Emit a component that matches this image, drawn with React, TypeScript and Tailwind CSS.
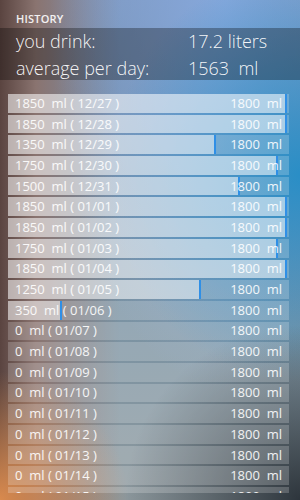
const ROWS: [number, string][] = [
  [1850, "12/27"],
  [1850, "12/28"],
  [1350, "12/29"],
  [1750, "12/30"],
  [1500, "12/31"],
  [1850, "01/01"],
  [1850, "01/02"],
  [1750, "01/03"],
  [1850, "01/04"],
  [1250, "01/05"],
  [350, "01/06"],
  [0, "01/07"],
  [0, "01/08"],
  [0, "01/09"],
  [0, "01/10"],
  [0, "01/11"],
  [0, "01/12"],
  [0, "01/13"],
  [0, "01/14"],
  [0, "01/15"],
];

function Row({ ml, date }: { ml: number; date: string }) {
  const pct = Math.min((ml / 1820) * 100, 99.3);
  return (
    <div className="relative h-[18.7px] shrink-0 bg-white/20">
      {ml > 0 && (
        <div
          className="absolute inset-y-0 left-0 bg-white/45 border-r-2 border-[#2f8fe6]"
          style={{ width: `${pct}%` }}
        />
      )}
      <div className="relative flex h-full items-center justify-between pl-[7px] pr-[7px] text-[13px] leading-none text-white/90 whitespace-pre">
        <span>{`${ml}  ml ( ${date} )`}</span>
        <span>{"1800  ml"}</span>
      </div>
    </div>
  );
}

export default function App() {
  return (
    <div
      className="w-[300px] h-[500px] overflow-hidden flex flex-col text-white bg-[radial-gradient(circle_at_0%_100%,#d98a4e_0%,transparent_22%),radial-gradient(circle_at_100%_100%,#2d353c_0%,transparent_30%),radial-gradient(ellipse_at_100%_35%,#2a8ec6_0%,transparent_45%),radial-gradient(ellipse_at_75%_0%,#86a8dc_0%,transparent_55%),linear-gradient(to_right,#5a4440_0%,#8a7470_12%,transparent_40%),linear-gradient(to_bottom,#7d96bb_0%,#6f8ca6_35%,#7b93a3_65%,#8c979c_100%)]"
      style={{ fontFamily: '"Open Sans", "Noto Sans", sans-serif' }}
    >
      <div className="h-[28px] pl-4 pt-[13px] text-[11px] font-semibold leading-none tracking-[0.2px] text-white/90">
        HISTORY
      </div>
      <div className="h-[52px] bg-black/30 flex flex-col justify-center gap-[3px] pl-4 text-[18px] font-light leading-[24px] text-white/95">
        <div className="flex">
          <span className="w-[172px]">you drink:</span>
          <span>17.2 liters</span>
        </div>
        <div className="flex whitespace-pre">
          <span className="w-[172px]">average per day:</span>
          <span>{"1563  ml"}</span>
        </div>
      </div>
      <div className="mt-[14px] ml-2 w-[281px] h-[399px] overflow-hidden flex flex-col gap-[2px]">
        {ROWS.map(([ml, date]) => (
          <Row key={date} ml={ml} date={date} />
        ))}
      </div>
    </div>
  );
}
